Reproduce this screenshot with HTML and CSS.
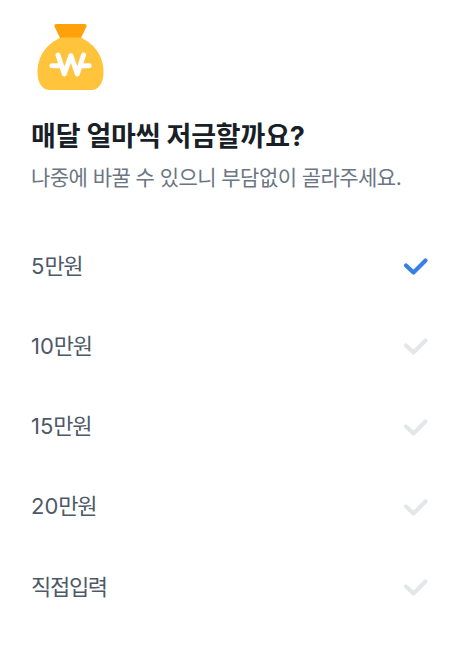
FILE: index.html
```html
<!DOCTYPE html>
<html lang="ko">

<head>
    <meta charset="UTF-8">
    <meta name="viewport" content="width=device-width, initial-scale=1.0">
    <title>매달 얼마씩 저금할까요?</title>
    <link rel="stylesheet" href="styles.css">
</head>

<body>
    <main class="container">
        <svg class="money-bag" viewBox="0 0 68 68">
            <path d="M19.5 1 H47.5 Q50.5 1 49.3 4 L43 17 H24 L17.7 4 Q16.5 1 19.5 1 Z" fill="#ffa10a" />
            <path d="M24.5 14.5 H43 C57 20 66.5 33 66.5 49 C66.5 61 61 67 54 67 H13 C6 67 0.5 61 0.5 49 C0.5 33 10 20 24.5 14.5 Z" fill="#ffc33c" />
            <path d="M21 32 L27.3 51 L33.9 32.5 L40.3 51 L46.5 32 M15 42.7 H23 M45 42.7 H52" class="won" />
        </svg>
        <h1 class="title">매달 얼마씩 저금할까요?</h1>
        <p class="description">나중에 바꿀 수 있으니 부담없이 골라주세요.</p>

        <ul class="amount-list">
            <li class="amount selected">
                <span class="label"><span class="number">5</span>만원</span>
                <svg class="check" viewBox="0 0 26 20"><path d="M3 9.5 L10.5 16.5 L22.5 4.5" /></svg>
            </li>
            <li class="amount">
                <span class="label"><span class="number">10</span>만원</span>
                <svg class="check" viewBox="0 0 26 20"><path d="M3 9.5 L10.5 16.5 L22.5 4.5" /></svg>
            </li>
            <li class="amount">
                <span class="label"><span class="number">15</span>만원</span>
                <svg class="check" viewBox="0 0 26 20"><path d="M3 9.5 L10.5 16.5 L22.5 4.5" /></svg>
            </li>
            <li class="amount">
                <span class="label"><span class="number">20</span>만원</span>
                <svg class="check" viewBox="0 0 26 20"><path d="M3 9.5 L10.5 16.5 L22.5 4.5" /></svg>
            </li>
            <li class="amount">
                <span class="label">직접입력</span>
                <svg class="check" viewBox="0 0 26 20"><path d="M3 9.5 L10.5 16.5 L22.5 4.5" /></svg>
            </li>
        </ul>
    </main>
</body>

</html>
```
FILE: styles.css
```css
* {
    box-sizing: border-box;
    margin: 0;
    padding: 0;
}

body {
    background-color: #fff;
    font-family: "Inter", "Noto Sans CJK KR", sans-serif;
}

.container {
    padding: 23px 37px 0 31px;
}

.money-bag {
    display: block;
    width: 68px;
    height: 68px;
    margin-left: 6px;
}

.won {
    fill: none;
    stroke: #fff;
    stroke-width: 5;
    stroke-linecap: round;
    stroke-linejoin: round;
}

.title {
    margin-top: 26px;
    color: #191f28;
    font-size: 27px;
    font-weight: 700;
    line-height: 40px;
    letter-spacing: -0.2px;
    white-space: nowrap;
}

.description {
    margin-top: 5px;
    color: #6b7684;
    font-size: 21px;
    line-height: 32px;
    letter-spacing: -0.55px;
    white-space: nowrap;
}

.amount-list {
    margin-top: 32px;
    list-style: none;
}

.amount {
    display: flex;
    justify-content: space-between;
    align-items: center;
    height: 80.25px;
    color: #4e5968;
}

.label {
    padding-bottom: 5px;
    font-size: 22px;
    letter-spacing: -1.3px;
}

.number {
    letter-spacing: 0;
}

.check {
    width: 26px;
    height: 20px;
    fill: none;
    stroke: #e3e7ea;
    stroke-width: 4.2;
    stroke-linecap: round;
    stroke-linejoin: round;
}

.selected .check {
    stroke: #3980e6;
}
```
